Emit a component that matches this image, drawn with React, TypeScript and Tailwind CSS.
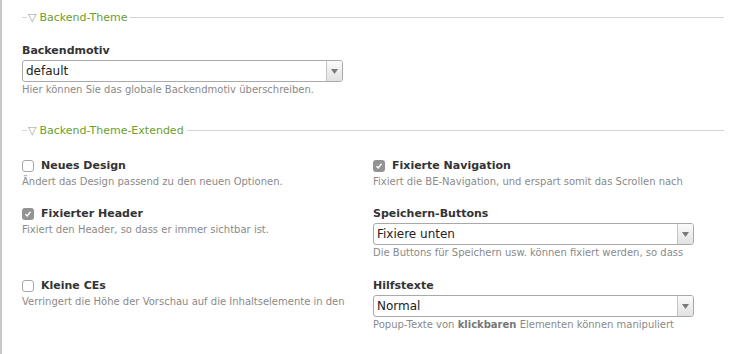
import React from "react";

const font = { fontFamily: '"DejaVu Sans", Verdana, sans-serif' };

function Legend({ title }: { title: string }) {
  return (
    <div className="flex items-center h-[14px]">
      <div className="w-[5px] h-px bg-[#d4d4d4]" />
      <span className="ml-[1px] text-[#9a9a9a] text-[11px] leading-none">▽</span>
      <span className="ml-[3px] text-[#6a9e2c] text-[11px] leading-none">{title}</span>
      <div className="ml-[3px] flex-1 h-px bg-[#d4d4d4]" />
    </div>
  );
}

function Select({ value }: { value: string }) {
  return (
    <div className="flex h-[22px] w-[321px] border border-[#a9a9a9] rounded-[3px] bg-white overflow-hidden">
      <div className="flex-1 flex items-center pl-[3px] text-[12px] leading-none text-[#222]">{value}</div>
      <div className="w-[16px] border-l border-[#c4c4c4] bg-gradient-to-b from-[#fbfbfb] to-[#e2e2e2] flex items-center justify-center">
        <svg width="7" height="5" viewBox="0 0 7 5"><path d="M0 0h7L3.5 5z" fill="#7a7a7a" /></svg>
      </div>
    </div>
  );
}

function Checkbox({ checked }: { checked?: boolean }) {
  if (checked)
    return (
      <div className="w-[12px] h-[12px] rounded-[3px] bg-[#939393] flex items-center justify-center">
        <svg width="8" height="8" viewBox="0 0 8 8"><path d="M1.5 4.2 3.2 6 6.5 1.8" stroke="#fff" strokeWidth="1.4" fill="none" /></svg>
      </div>
    );
  return <div className="w-[12px] h-[12px] rounded-[3px] border border-[#a6a6a6] bg-white" />;
}

function CheckField({ checked, label, desc }: { checked?: boolean; label: string; desc: string }) {
  return (
    <div className="flex flex-col">
      <div className="flex items-center h-[14px]">
        <Checkbox checked={checked} />
        <span className="ml-[7px] text-[11px] leading-[14px] font-bold text-[#333]">{label}</span>
      </div>
      <div className="mt-[3px] h-[12px] text-[10px] leading-[12px] text-[#8a8a8a] whitespace-nowrap">{desc}</div>
    </div>
  );
}

function SelectField({ label, value, desc }: { label: string; value: string; desc: React.ReactNode }) {
  return (
    <div className="flex flex-col">
      <div className="h-[14px] text-[11px] leading-[14px] font-bold text-[#333]">{label}</div>
      <div className="mt-[2px]"><Select value={value} /></div>
      <div className="mt-[2px] h-[12px] text-[10px] leading-[12px] text-[#8a8a8a] whitespace-nowrap">{desc}</div>
    </div>
  );
}

export default function App() {
  return (
    <div style={font} className="w-[743px] h-[354px] bg-white border-l-2 border-[#c8c8c8] overflow-hidden">
      <div className="pl-[20px] pr-[19px] pt-[10px]">
        <Legend title="Backend-Theme" />
        <div className="mt-[20px]">
          <SelectField label="Backendmotiv" value="default" desc="Hier können Sie das globale Backendmotiv überschreiben." />
        </div>
        <div className="mt-[27px]">
          <Legend title="Backend-Theme-Extended" />
        </div>
        <div className="mt-[22px] grid grid-cols-[351px_1fr] items-start gap-y-[19px]">
          <CheckField label="Neues Design" desc="Ändert das Design passend zu den neuen Optionen." />
          <CheckField checked label="Fixierte Navigation" desc="Fixiert die BE-Navigation, und erspart somit das Scrollen nach" />
          <CheckField checked label="Fixierter Header" desc="Fixiert den Header, so dass er immer sichtbar ist." />
          <SelectField label="Speichern-Buttons" value="Fixiere unten" desc="Die Buttons für Speichern usw. können fixiert werden, so dass" />
          <div className="mt-[1px]">
            <CheckField label="Kleine CEs" desc="Verringert die Höhe der Vorschau auf die Inhaltselemente in den" />
          </div>
          <div className="mt-[1px]">
            <SelectField label="Hilfstexte" value="Normal" desc={<>Popup-Texte von <b className="text-[#777]">klickbaren</b> Elementen können manipuliert</>} />
          </div>
        </div>
      </div>
    </div>
  );
}
